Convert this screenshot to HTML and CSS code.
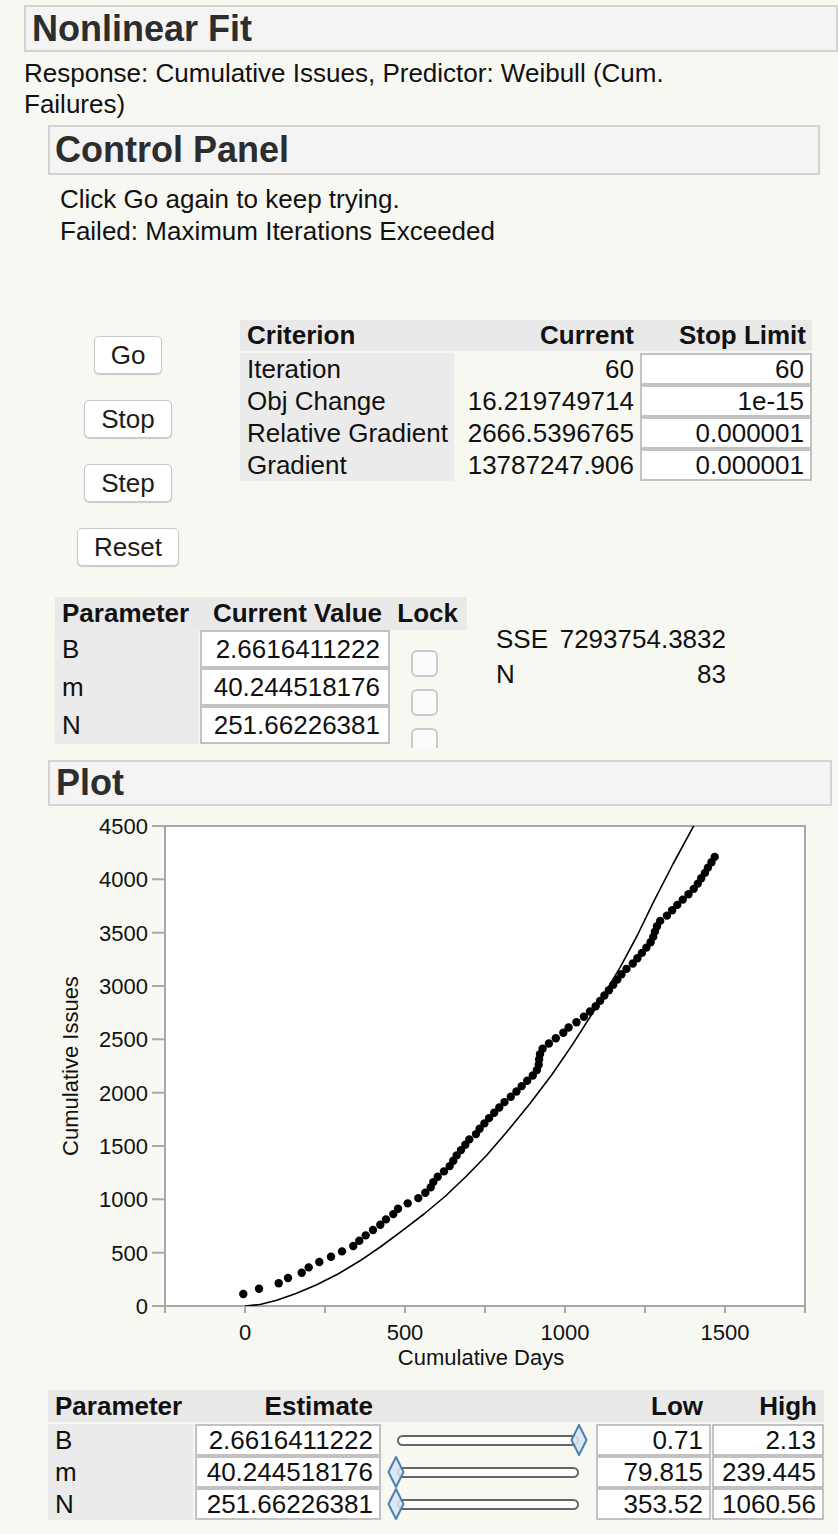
FILE: index.html
```html
<!DOCTYPE html>
<html lang="en">
<head>
<meta charset="utf-8">
<title>Nonlinear Fit</title>
<link rel="stylesheet" href="styles.css">
</head>
<body>
<div class="report">
  <div class="outline top-outline"><h1 class="outline-title">Nonlinear Fit</h1></div>
  <p class="response">Response: Cumulative Issues, Predictor: Weibull (Cum. Failures)</p>

  <section class="sub">
    <div class="outline cp-outline"><h2 class="outline-title">Control Panel</h2></div>
    <div class="messages">
      <div>Click Go again to keep trying.</div>
      <div>Failed: Maximum Iterations Exceeded</div>
    </div>

    <div class="cp-row">
      <div class="buttons">
        <button class="btn">Go</button>
        <button class="btn">Stop</button>
        <button class="btn">Step</button>
        <button class="btn">Reset</button>
      </div>
      <table class="crit">
        <thead>
          <tr><th class="c-lbl">Criterion</th><th class="c-cur">Current</th><th class="c-stop">Stop Limit</th></tr>
        </thead>
        <tbody>
          <tr><td class="c-lbl">Iteration</td><td class="c-cur">60</td><td class="c-stop"><div class="field">60</div></td></tr>
          <tr><td class="c-lbl">Obj Change</td><td class="c-cur">16.219749714</td><td class="c-stop"><div class="field">1e-15</div></td></tr>
          <tr><td class="c-lbl">Relative Gradient</td><td class="c-cur">2666.5396765</td><td class="c-stop"><div class="field">0.000001</div></td></tr>
          <tr><td class="c-lbl">Gradient</td><td class="c-cur">13787247.906</td><td class="c-stop"><div class="field">0.000001</div></td></tr>
        </tbody>
      </table>
    </div>

    <div class="param-row">
      <div class="ptable">
        <div class="ph ph-name">Parameter</div>
        <div class="ph ph-val">Current Value</div>
        <div class="ph ph-lock">Lock</div>
        <div class="plbl r1">B</div>
        <div class="pval r1"><div class="field tall">2.6616411222</div></div>
        <div class="plbl r2">m</div>
        <div class="pval r2"><div class="field tall">40.244518176</div></div>
        <div class="plbl r3">N</div>
        <div class="pval r3"><div class="field tall">251.66226381</div></div>
        <div class="lock-col">
          <span class="check"></span>
          <span class="check"></span>
          <span class="check"></span>
        </div>
      </div>
      <div class="sse">
        <span>SSE</span><span class="num">7293754.3832</span>
        <span>N</span><span class="num">83</span>
      </div>
    </div>
  </section>

  <section class="sub plot-sub">
    <div class="outline plot-outline"><h2 class="outline-title">Plot</h2></div>
    <svg class="plot" width="790" height="580" viewBox="48 806 790 580" xmlns="http://www.w3.org/2000/svg">
      <defs>
        <clipPath id="frameclip"><rect x="165" y="826" width="640" height="480"/></clipPath>
      </defs>
      <rect x="165" y="826" width="640" height="480" fill="#ffffff" stroke="#a8a8a8" stroke-width="2"/>
      <g stroke="#a8a8a8" stroke-width="2">
        <line x1="152" y1="826" x2="165" y2="826"/>
        <line x1="152" y1="879.3" x2="165" y2="879.3"/>
        <line x1="152" y1="932.7" x2="165" y2="932.7"/>
        <line x1="152" y1="986" x2="165" y2="986"/>
        <line x1="152" y1="1039.3" x2="165" y2="1039.3"/>
        <line x1="152" y1="1092.7" x2="165" y2="1092.7"/>
        <line x1="152" y1="1146" x2="165" y2="1146"/>
        <line x1="152" y1="1199.3" x2="165" y2="1199.3"/>
        <line x1="152" y1="1252.7" x2="165" y2="1252.7"/>
        <line x1="152" y1="1306" x2="165" y2="1306"/>
        <line x1="165" y1="1306" x2="165" y2="1313"/>
        <line x1="245" y1="1306" x2="245" y2="1313"/>
        <line x1="325" y1="1306" x2="325" y2="1313"/>
        <line x1="405" y1="1306" x2="405" y2="1313"/>
        <line x1="485" y1="1306" x2="485" y2="1313"/>
        <line x1="565" y1="1306" x2="565" y2="1313"/>
        <line x1="645" y1="1306" x2="645" y2="1313"/>
        <line x1="725" y1="1306" x2="725" y2="1313"/>
        <line x1="805" y1="1306" x2="805" y2="1313"/>
      </g>
      <g class="axis-text" text-anchor="end">
        <text x="148" y="834">4500</text>
        <text x="148" y="887.3">4000</text>
        <text x="148" y="940.7">3500</text>
        <text x="148" y="994">3000</text>
        <text x="148" y="1047.3">2500</text>
        <text x="148" y="1100.7">2000</text>
        <text x="148" y="1154">1500</text>
        <text x="148" y="1207.3">1000</text>
        <text x="148" y="1260.7">500</text>
        <text x="148" y="1314">0</text>
      </g>
      <g class="axis-text" text-anchor="middle">
        <text x="245" y="1340">0</text>
        <text x="405" y="1340">500</text>
        <text x="565" y="1340">1000</text>
        <text x="725" y="1340">1500</text>
        <text x="481" y="1365">Cumulative Days</text>
      </g>
      <text class="axis-text" text-anchor="middle" transform="translate(78,1066) rotate(-90)">Cumulative Issues</text>
      <g clip-path="url(#frameclip)">
        <polyline fill="none" stroke="#000" stroke-width="1.6" stroke-linejoin="round"
          points="245,1306 260,1304.5 276.7,1300.2 296,1293.5 316.7,1284.8 338,1274 360,1260.8 381,1246.5 403.3,1229.9 424,1214 445,1196.5 466,1176.5 486.7,1155.2 508,1130.5 530,1103.6 552,1074.5 573.3,1043.4 597,1006 620,967.7 637,936 653.3,902.4 673,864 693.3,826.7 700,813"/>
        <g fill="#000">
          <circle cx="243.3" cy="1294.0" r="4.2"/>
          <circle cx="259" cy="1288.7" r="4.2"/>
          <circle cx="278.7" cy="1283.3" r="4.2"/>
          <circle cx="288" cy="1278.0" r="4.2"/>
          <circle cx="301.7" cy="1272.7" r="4.2"/>
          <circle cx="308.7" cy="1267.4" r="4.2"/>
          <circle cx="319.3" cy="1262.0" r="4.2"/>
          <circle cx="331" cy="1256.7" r="4.2"/>
          <circle cx="342" cy="1251.4" r="4.2"/>
          <circle cx="353.3" cy="1246.0" r="4.2"/>
          <circle cx="359.3" cy="1240.7" r="4.2"/>
          <circle cx="365.7" cy="1235.4" r="4.2"/>
          <circle cx="373" cy="1230.0" r="4.2"/>
          <circle cx="380.3" cy="1224.7" r="4.2"/>
          <circle cx="386" cy="1219.4" r="4.2"/>
          <circle cx="393.3" cy="1214.1" r="4.2"/>
          <circle cx="398" cy="1208.7" r="4.2"/>
          <circle cx="407.7" cy="1203.4" r="4.2"/>
          <circle cx="418.3" cy="1198.1" r="4.2"/>
          <circle cx="425.3" cy="1192.7" r="4.2"/>
          <circle cx="430.7" cy="1187.4" r="4.2"/>
          <circle cx="433.3" cy="1182.1" r="4.2"/>
          <circle cx="437.7" cy="1176.7" r="4.2"/>
          <circle cx="444" cy="1171.4" r="4.2"/>
          <circle cx="449.7" cy="1166.1" r="4.2"/>
          <circle cx="453.3" cy="1160.8" r="4.2"/>
          <circle cx="456.7" cy="1155.4" r="4.2"/>
          <circle cx="461" cy="1150.1" r="4.2"/>
          <circle cx="465.3" cy="1144.8" r="4.2"/>
          <circle cx="469.3" cy="1139.4" r="4.2"/>
          <circle cx="476" cy="1134.1" r="4.2"/>
          <circle cx="479.6" cy="1128.8" r="4.2"/>
          <circle cx="484.4" cy="1123.4" r="4.2"/>
          <circle cx="489.1" cy="1118.1" r="4.2"/>
          <circle cx="494.2" cy="1112.8" r="4.2"/>
          <circle cx="499.3" cy="1107.5" r="4.2"/>
          <circle cx="504.5" cy="1102.1" r="4.2"/>
          <circle cx="510.8" cy="1096.8" r="4.2"/>
          <circle cx="516.5" cy="1091.5" r="4.2"/>
          <circle cx="521.7" cy="1086.1" r="4.2"/>
          <circle cx="527.2" cy="1080.8" r="4.2"/>
          <circle cx="532.8" cy="1075.5" r="4.2"/>
          <circle cx="536.9" cy="1070.1" r="4.2"/>
          <circle cx="538.7" cy="1064.8" r="4.2"/>
          <circle cx="539.1" cy="1059.5" r="4.2"/>
          <circle cx="540" cy="1054.2" r="4.2"/>
          <circle cx="542.6" cy="1048.8" r="4.2"/>
          <circle cx="548.9" cy="1043.5" r="4.2"/>
          <circle cx="555.8" cy="1038.2" r="4.2"/>
          <circle cx="563.3" cy="1032.8" r="4.2"/>
          <circle cx="568.6" cy="1027.5" r="4.2"/>
          <circle cx="576.5" cy="1022.2" r="4.2"/>
          <circle cx="583.9" cy="1016.8" r="4.2"/>
          <circle cx="590" cy="1011.5" r="4.2"/>
          <circle cx="595.7" cy="1006.2" r="4.2"/>
          <circle cx="600.1" cy="1000.9" r="4.2"/>
          <circle cx="604.4" cy="995.5" r="4.2"/>
          <circle cx="608.9" cy="990.2" r="4.2"/>
          <circle cx="613.2" cy="984.9" r="4.2"/>
          <circle cx="617.3" cy="979.5" r="4.2"/>
          <circle cx="621.5" cy="974.2" r="4.2"/>
          <circle cx="626.5" cy="968.9" r="4.2"/>
          <circle cx="632.8" cy="963.5" r="4.2"/>
          <circle cx="637.4" cy="958.2" r="4.2"/>
          <circle cx="641.9" cy="952.9" r="4.2"/>
          <circle cx="646.4" cy="947.6" r="4.2"/>
          <circle cx="650.6" cy="942.2" r="4.2"/>
          <circle cx="653.2" cy="936.9" r="4.2"/>
          <circle cx="654.9" cy="931.6" r="4.2"/>
          <circle cx="657" cy="926.2" r="4.2"/>
          <circle cx="660.2" cy="920.9" r="4.2"/>
          <circle cx="666.9" cy="915.6" r="4.2"/>
          <circle cx="672.2" cy="910.2" r="4.2"/>
          <circle cx="677.3" cy="904.9" r="4.2"/>
          <circle cx="682.8" cy="899.6" r="4.2"/>
          <circle cx="688.5" cy="894.3" r="4.2"/>
          <circle cx="693.7" cy="888.9" r="4.2"/>
          <circle cx="697.8" cy="883.6" r="4.2"/>
          <circle cx="701.2" cy="878.3" r="4.2"/>
          <circle cx="704.9" cy="872.9" r="4.2"/>
          <circle cx="707.9" cy="867.6" r="4.2"/>
          <circle cx="711.5" cy="862.3" r="4.2"/>
          <circle cx="714.7" cy="856.9" r="4.2"/>
        </g>
      </g>
    </svg>

    <div class="btable">
      <div class="bh bh-name">Parameter</div>
      <div class="bh bh-est">Estimate</div>
      <div class="bh"></div>
      <div class="bh bh-num">Low</div>
      <div class="bh bh-num bh-high">High</div>

      <div class="blbl">B</div>
      <div class="best"><div class="field">2.6616411222</div></div>
      <div class="bslider"><div class="track"></div><svg class="thumb at-max" width="18" height="32" viewBox="0 0 18 32"><path d="M9 1 L16.5 16 L9 31 L1.5 16 Z" fill="rgba(214,229,246,0.85)" stroke="#4d7fad" stroke-width="2" stroke-linejoin="round"/></svg></div>
      <div class="blow"><div class="field">0.71</div></div>
      <div class="bhigh"><div class="field">2.13</div></div>

      <div class="blbl">m</div>
      <div class="best"><div class="field">40.244518176</div></div>
      <div class="bslider"><div class="track"></div><svg class="thumb at-min" width="18" height="32" viewBox="0 0 18 32"><path d="M9 1 L16.5 16 L9 31 L1.5 16 Z" fill="rgba(214,229,246,0.85)" stroke="#4d7fad" stroke-width="2" stroke-linejoin="round"/></svg></div>
      <div class="blow"><div class="field">79.815</div></div>
      <div class="bhigh"><div class="field">239.445</div></div>

      <div class="blbl">N</div>
      <div class="best"><div class="field">251.66226381</div></div>
      <div class="bslider"><div class="track"></div><svg class="thumb at-min" width="18" height="32" viewBox="0 0 18 32"><path d="M9 1 L16.5 16 L9 31 L1.5 16 Z" fill="rgba(214,229,246,0.85)" stroke="#4d7fad" stroke-width="2" stroke-linejoin="round"/></svg></div>
      <div class="blow"><div class="field">353.52</div></div>
      <div class="bhigh"><div class="field">1060.56</div></div>
    </div>
  </section>
</div>
</body>
</html>
```

FILE: styles.css
```css
* { box-sizing: border-box; }
html, body { margin: 0; padding: 0; }
body {
  background: #f8f8f3;
  font-family: "Liberation Sans", Arial, Helvetica, sans-serif;
  color: #111;
  font-size: 26px;
  width: 838px;
  height: 1534px;
  overflow: hidden;
}
.report { padding-top: 5px; }

/* outline headers */
.outline {
  height: 47px;
  border: 2px solid #d3d3d3;
  background: #f4f4f4;
  padding-left: 6px;
  display: flex;
  align-items: center;
}
.outline-title {
  margin: 0;
  font-size: 36px;
  font-weight: bold;
  color: #2d2d2d;
  line-height: 1;
}
.top-outline { margin-left: 24px; width: 814px; }
.response {
  margin: 6px 0 0 24px;
  line-height: 31px;
  max-width: 665px;
}
.sub { margin-left: 48px; }
.cp-outline { margin-top: 5px; width: 772px; height: 50px; padding-left: 5px; }
.messages { padding-left: 12px; line-height: 32px; margin-top: 8px; }

/* control panel */
.cp-row { display: flex; margin-top: 73px; }
.buttons {
  width: 160px;
  display: flex;
  flex-direction: column;
  align-items: center;
  gap: 26px;
  padding-top: 16px;
}
.btn {
  height: 38px;
  padding: 0 16px;
  font-family: inherit;
  font-size: 26px;
  color: #1c1c1c;
  background: #fff;
  border: 1px solid #c9c9c9;
  border-radius: 5px;
  box-shadow: 0 1px 1px rgba(0,0,0,0.18);
}
.crit {
  margin-left: 32px;
  border-collapse: separate;
  border-spacing: 0;
  font-size: 26px;
  align-self: flex-start;
}
.crit th {
  height: 33px;
  padding: 0;
  background: #e9e9e9;
  border-bottom: 2px solid #f8f8f3;
  text-align: right;
  font-weight: bold;
  color: #111;
}
.crit td { height: 32px; padding: 0; }
.crit .c-lbl { width: 214px; padding-left: 7px; text-align: left; }
.crit td.c-lbl { background: #ebebeb; }
.crit .c-cur { width: 186px; padding-right: 6px; text-align: right; }
.crit .c-stop { width: 172px; padding-right: 6px; }
.crit td.c-stop { padding-right: 0; }

.field {
  height: 32px;
  border: 2px solid #c2c2c2;
  background: #fff;
  text-align: right;
  padding-right: 6px;
  line-height: 28px;
  white-space: nowrap;
}
.field.tall { height: 38px; line-height: 34px; padding-right: 8px; }

/* parameters */
.param-row { display: flex; margin-top: 31px; margin-left: 7px; }
.ptable {
  display: grid;
  grid-template-columns: 144px 193px 75px;
  grid-template-rows: 33px 38px 38px 38px;
}
.ph {
  background: #e9e9e9;
  font-weight: bold;
  line-height: 33px;
  text-align: right;
}
.ph-name { text-align: left; padding-left: 7px; }
.ph-val { padding-right: 10px; }
.ph-lock { padding-right: 9px; }
.plbl { background: #ebebeb; padding-left: 7px; line-height: 38px; grid-column: 1; }
.pval { grid-column: 2; padding-left: 1px; padding-right: 2px; }
.r1 { grid-row: 2; }
.r2 { grid-row: 3; }
.r3 { grid-row: 4; }
.lock-col {
  grid-column: 3;
  grid-row: 2 / 5;
  align-self: start;
  height: 118px;
  overflow: hidden;
  display: flex;
  flex-direction: column;
  gap: 12px;
  padding: 20px 0 0 19px;
}
.check {
  display: block;
  flex: none;
  width: 27px;
  height: 27px;
  border: 2px solid #cacaca;
  border-radius: 6px;
  background: #fbfbfb;
}
.sse {
  margin-left: 29px;
  margin-top: 25px;
  width: 230px;
  display: grid;
  grid-template-columns: auto 1fr;
  align-content: start;
  line-height: 35px;
}
.sse .num { text-align: right; }

/* plot */
.plot-sub { margin-top: 16px; }
.plot-outline { width: 784px; height: 46px; }
.plot { display: block; }
.axis-text { font-family: "Liberation Sans", Arial, sans-serif; font-size: 22px; fill: #111; }

/* bottom table */
.btable {
  margin-top: 4px;
  display: grid;
  grid-template-columns: 145px 190px 211px 117px 113px;
  grid-template-rows: 34px 32px 32px 32px;
}
.bh {
  height: 32px;
  background: #e9e9e9;
  font-weight: bold;
  line-height: 32px;
}
.bh-name { padding-left: 7px; }
.bh-est { text-align: right; padding-right: 10px; }
.bh-num { text-align: right; padding-right: 8px; }
.bh-high { padding-right: 7px; }
.blbl { background: #ebebeb; padding-left: 7px; line-height: 32px; }
.best { padding: 0 2px; }
.blow { padding-left: 2px; }
.bhigh { padding-left: 1px; }
.bslider { position: relative; }
.track {
  margin: 11px 0 0 14px;
  width: 182px;
  height: 11px;
  border: 2px solid #666;
  border-radius: 6px;
  background: #fff;
}
.thumb { position: absolute; top: 0; }
.thumb.at-max { left: 187px; }
.thumb.at-min { left: 4px; }
```
